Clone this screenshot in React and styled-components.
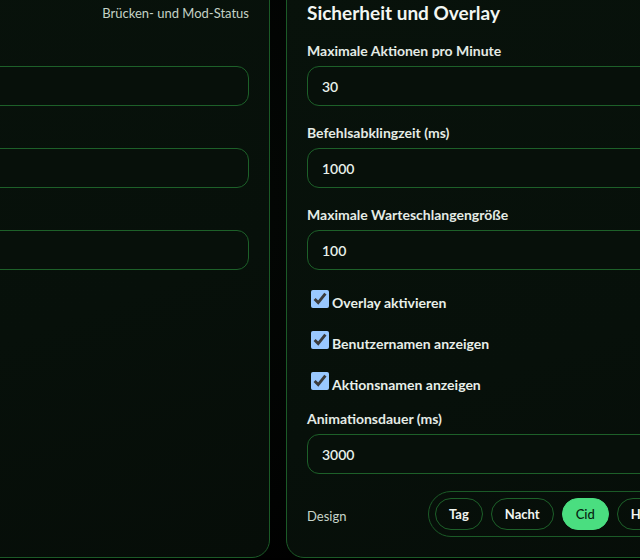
import React, { useState } from 'react';
import styled, { createGlobalStyle } from 'styled-components';

// Einstellungsseite: Brücke links, Sicherheit und Overlay rechts

const GlobalStyle = createGlobalStyle`
  html, body {
    margin: 0;
    height: 100%;
    overflow: hidden;
    background: #000;
  }
  body {
    font-family: Lato, "Liberation Sans", sans-serif;
    color: #e8efe9;
  }
`;

const Page = styled.main`
  display: grid;
  grid-template-columns: 570px 570px;
  gap: 16px;
  margin-top: -20px;
  margin-left: -300px;
  background: radial-gradient(circle at 50% 40%, #040805, #000 70%);
`;

const Panel = styled.section`
  display: flex;
  flex-direction: column;
  gap: 18px;
  padding: 20px 20px 20px;
  border: 1px solid #1b5a27;
  border-radius: 18px;
  background: linear-gradient(160deg, #08120b 0%, #07100a 60%, #060d08 100%);
`;

const PanelHeader = styled.header`
  display: flex;
  align-items: center;
  justify-content: space-between;
  height: 23px;
`;

const PanelTitle = styled.h2`
  margin: 0;
  font-size: 19px;
  line-height: 24px;
  font-weight: 700;
  color: #f2f6f2;
`;

const PanelHint = styled.span`
  font-size: 13px;
  line-height: 16px;
  color: #c4d2c6;
`;

const Field = styled.label`
  display: flex;
  flex-direction: column;
  gap: 6px;
`;

const FieldLabel = styled.span`
  font-size: 14px;
  line-height: 18px;
  font-weight: 700;
  color: #e4ebe5;
`;

const TextInput = styled.input`
  box-sizing: border-box;
  height: 40px;
  width: 100%;
  padding: 0 14px;
  border: 1px solid #1d6029;
  border-radius: 12px;
  background: #07100a;
  color: #e9f0ea;
  font-family: Lato, "Liberation Sans", sans-serif;
  font-size: 14px;
  font-weight: 600;
  outline: none;
`;

const CheckList = styled.div`
  display: flex;
  flex-direction: column;
  gap: 19px;
  margin-top: 2px;
  margin-bottom: -2px;
`;

const CheckRow = styled.label`
  display: flex;
  align-items: flex-start;
  height: 22px;
  cursor: pointer;
`;

const CheckBox = styled.input.attrs({ type: 'checkbox' })`
  width: 18px;
  height: 18px;
  margin: 0 3px 0 4px;
  color-scheme: dark;
  accent-color: #99c8ff;
`;

const CheckText = styled.span`
  padding-top: 4px;
  font-size: 14px;
  line-height: 18px;
  font-weight: 700;
  color: #e8efe9;
`;

const DesignRow = styled.div`
  display: flex;
  align-items: center;
  margin-top: -1px;
`;

const DesignLabel = styled.span`
  flex: 0 0 121px;
  padding-top: 3px;
  font-size: 13px;
  color: #c7d4c9;
`;

const ThemeGroup = styled.div`
  display: inline-flex;
  gap: 8px;
  padding: 6px;
  border: 1px solid #1b5a27;
  border-radius: 999px;
  white-space: nowrap;
`;

const ThemeButton = styled.button`
  height: 32px;
  padding: 0 13px;
  border: 1px solid ${(p) => (p.$active ? '#4ade80' : '#1d6029')};
  border-radius: 999px;
  background: ${(p) => (p.$active ? '#4ade80' : 'transparent')};
  color: ${(p) => (p.$active ? '#06230f' : '#f1f5f1')};
  font-family: Lato, "Liberation Sans", sans-serif;
  font-size: 13px;
  font-weight: ${(p) => (p.$active ? 500 : 700)};
  cursor: pointer;
`;

const bridgeFields = [
  { label: 'Bridge-URL', value: '' },
  { label: 'Mod-Port', value: '' },
  { label: 'API-Schlüssel', value: '' },
];

const safetyFields = [
  { label: 'Maximale Aktionen pro Minute', value: '30' },
  { label: 'Befehlsabklingzeit (ms)', value: '1000' },
  { label: 'Maximale Warteschlangengröße', value: '100' },
];

const overlayChecks = ['Overlay aktivieren', 'Benutzernamen anzeigen', 'Aktionsnamen anzeigen'];

const themes = ['Tag', 'Nacht', 'Cid', 'Hacker'];

export default function App() {
  const [theme, setTheme] = useState('Cid');

  return (
    <>
      <GlobalStyle />
      <Page>
        <Panel>
          <PanelHeader>
            <PanelTitle>Verbindung</PanelTitle>
            <PanelHint>Brücken- und Mod-Status</PanelHint>
          </PanelHeader>
          {bridgeFields.map((f) => (
            <Field key={f.label}>
              <FieldLabel>{f.label}</FieldLabel>
              <TextInput defaultValue={f.value} />
            </Field>
          ))}
        </Panel>

        <Panel>
          <PanelHeader>
            <PanelTitle>Sicherheit und Overlay</PanelTitle>
          </PanelHeader>
          {safetyFields.map((f) => (
            <Field key={f.label}>
              <FieldLabel>{f.label}</FieldLabel>
              <TextInput defaultValue={f.value} />
            </Field>
          ))}
          <CheckList>
            {overlayChecks.map((c) => (
              <CheckRow key={c}>
                <CheckBox defaultChecked />
                <CheckText>{c}</CheckText>
              </CheckRow>
            ))}
          </CheckList>
          <Field>
            <FieldLabel>Animationsdauer (ms)</FieldLabel>
            <TextInput defaultValue="3000" />
          </Field>
          <DesignRow>
            <DesignLabel>Design</DesignLabel>
            <ThemeGroup>
              {themes.map((t) => (
                <ThemeButton key={t} $active={t === theme} onClick={() => setTheme(t)}>
                  {t}
                </ThemeButton>
              ))}
            </ThemeGroup>
          </DesignRow>
        </Panel>
      </Page>
    </>
  );
}
